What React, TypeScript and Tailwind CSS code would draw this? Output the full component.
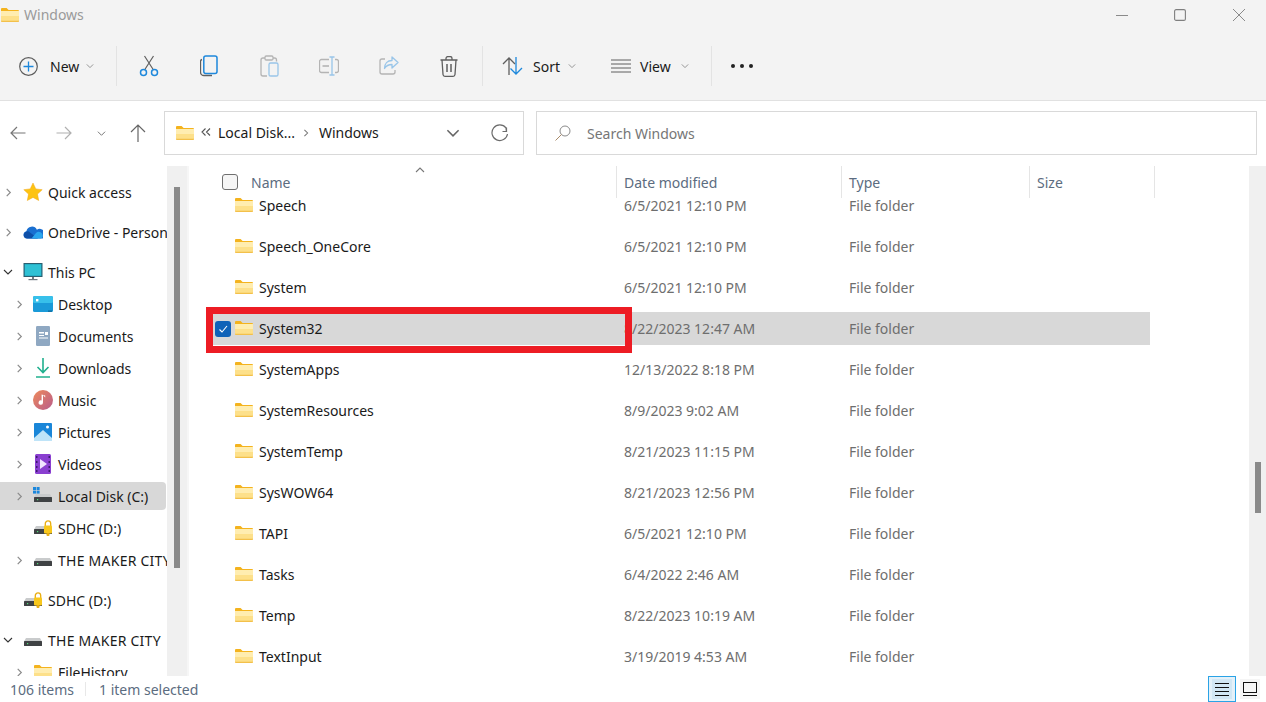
import React from "react";

const Chevron = ({ dir = "right", size = 10, color = "#7f7f7f" }: { dir?: "right" | "down" | "up"; size?: number; color?: string }) => (
  <svg width={size} height={size} viewBox="0 0 10 10" fill="none" stroke={color} strokeWidth={dir === "right" ? 1.3 : 1.1} className="shrink-0">
    {dir === "right" && <path d="M3 1l4 4-4 4" />}
    {dir === "down" && <path d="M1 3l4 4 4-4" />}
    {dir === "up" && <path d="M1 7l4-4 4 4" />}
  </svg>
);

const Folder = ({ w = 18, h = 14 }: { w?: number; h?: number }) => (
  <svg width={w} height={h} viewBox="0 0 18 14" className="shrink-0">
    <path d="M0 1a1 1 0 0 1 1-1h4.6l2 2H17a1 1 0 0 1 1 1v2H0z" fill="#f4b31e" />
    <rect x="0" y="3" width="18" height="11" rx="0.8" fill="#f3c04a" />
    <rect x="0" y="3" width="18" height="9.8" rx="0.5" fill="#fde08a" />
    <rect x="0" y="3" width="18" height="5" fill="#ffedb0" />
  </svg>
);

const Drive = ({ lock, win }: { lock?: boolean; win?: boolean }) => (
  <svg width="20" height="20" viewBox="0 0 20 20" className="shrink-0">
    <path d="M3 8h14l2 3.5H1z" fill="#c9cbcc" />
    <rect x="1" y="11" width="18" height="5" rx="0.5" fill="#3f4244" />
    <rect x="4" y="13" width="1.2" height="1.2" fill="#53e07c" />
    {win && (
      <g fill="#1b87dc">
        <rect x="0" y="1" width="3" height="3" />
        <rect x="3.6" y="1" width="3" height="3" />
        <rect x="0" y="4.6" width="3" height="3" />
        <rect x="3.6" y="4.6" width="3" height="3" />
      </g>
    )}
    {lock && (
      <g>
        <path d="M12.3 8V5.6a2.7 2.7 0 0 1 5.4 0V8" fill="none" stroke="#e8ac10" strokeWidth="1.3" />
        <rect x="11" y="7.5" width="8" height="8" rx="1" fill="#f8c71c" />
        <rect x="13.5" y="15" width="3" height="3" rx="1" fill="#e8ac10" />
      </g>
    )}
  </svg>
);

const icons: Record<string, React.ReactNode> = {
  star: (
    <svg width="20" height="20" viewBox="0 0 20 20" className="shrink-0">
      <path d="M10 1l2.8 5.9 6.4.8-4.7 4.4 1.2 6.4L10 15.4l-5.7 3.1 1.2-6.4L.8 7.7l6.4-.8z" fill="#fdc312" stroke="#f3a712" strokeWidth="0.5" />
    </svg>
  ),
  cloud: (
    <svg width="20" height="14" viewBox="0 0 20 14" className="shrink-0">
      <path d="M4 13.500a3.700 3.700 0 0 1-.6-7.300 5.600 5.600 0 0 1 10.500-1.500 4.600 4.600 0 0 1 5.600 8.800z" fill="#1a6fd0" />
      <path d="M4 13.500a3.300 3.300 0 0 1-2.900-4.800A3.600 3.600 0 0 1 7 7.400l8 6.100z" fill="#0e4fa8" />
      <path d="M8.500 13.500l4.500-5.500a4 4 0 0 1 6.700 3.600 2.600 2.600 0 0 1-2 1.900z" fill="#2ba6ee" />
    </svg>
  ),
  pc: (
    <svg width="20" height="18" viewBox="0 0 20 18" className="shrink-0">
      <rect x="1" y="0.500" width="18" height="13" fill="#1f9fb8" stroke="#2b5f70" />
      <rect x="2" y="1.500" width="16" height="11" fill="#2fc1d4" />
      <rect x="9" y="14" width="2" height="2" fill="#6f7a80" />
      <rect x="5.500" y="16" width="9" height="1.200" fill="#6f7a80" />
    </svg>
  ),
  desktop: (
    <svg width="20" height="16" viewBox="0 0 20 16" className="shrink-0">
      <rect x="0" y="0" width="20" height="16" rx="1.500" fill="#1a9ad8" />
      <rect x="0" y="0" width="20" height="7" rx="1.500" fill="#37c0ea" />
      <rect x="3" y="3" width="2.400" height="2.400" fill="#fff" />
      <rect x="15" y="14.600" width="4" height="1" fill="#0d5a88" />
    </svg>
  ),
  docs: (
    <svg width="16" height="20" viewBox="0 0 16 20" className="shrink-0">
      <rect x="1" y="0" width="14" height="20" rx="1.200" fill="#8fa8c2" />
      <rect x="4" y="6" width="5" height="1.500" fill="#fff" />
      <rect x="10" y="6" width="3" height="3" fill="#fff" />
      <rect x="4" y="9" width="5" height="1" fill="#fff" />
      <rect x="4" y="11.500" width="9" height="1" fill="#fff" />
    </svg>
  ),
  down: (
    <svg width="16" height="20" viewBox="0 0 16 20" className="shrink-0" fill="none" stroke="#20b08e" strokeWidth="1.600">
      <path d="M8 0v14M2.500 9L8 14.500 13.500 9" />
      <path d="M1 19h14" strokeWidth="1.500" />
    </svg>
  ),
  music: (
    <svg width="20" height="20" viewBox="0 0 20 20" className="shrink-0">
      <defs>
        <linearGradient id="mg" x1="0" y1="0" x2="1" y2="1">
          <stop offset="0" stopColor="#ee8a5a" />
          <stop offset="1" stopColor="#b85c8c" />
        </linearGradient>
      </defs>
      <circle cx="10" cy="10" r="10" fill="url(#mg)" />
      <path d="M10 5v7.500a2.200 2.200 0 1 1-1.400-2V4.500l3.600 1v2z" fill="#fff" />
    </svg>
  ),
  pics: (
    <svg width="18" height="18" viewBox="0 0 18 18" className="shrink-0">
      <rect width="18" height="18" rx="1" fill="#1a86d8" />
      <path d="M0 18V15l9-8 9 8v3z" fill="#bfe4f8" />
      <circle cx="13.500" cy="4" r="1.500" fill="#fff" />
    </svg>
  ),
  videos: (
    <svg width="16" height="20" viewBox="0 0 16 20" className="shrink-0">
      <rect width="16" height="20" rx="1.500" fill="#8a3fd0" />
      <path d="M5 5l7 5-7 5z" fill="#f0e4ff" />
      <g fill="#3d1a70">
        <rect x="1" y="2" width="1.500" height="2" />
        <rect x="1" y="7" width="1.500" height="2" />
        <rect x="1" y="12" width="1.500" height="2" />
        <rect x="1" y="16" width="1.500" height="2" />
        <rect x="13.500" y="2" width="1.500" height="2" />
        <rect x="13.500" y="7" width="1.500" height="2" />
        <rect x="13.500" y="12" width="1.500" height="2" />
        <rect x="13.500" y="16" width="1.500" height="2" />
      </g>
    </svg>
  ),
  disk: <Drive />,
  cdisk: <Drive win />,
  lockdisk: <Drive lock />,
  folder: <Folder />,
};

type Nav = { label: string; icon: string; level: 0 | 1; chev?: "right" | "down"; mt?: boolean; sel?: boolean; wide?: boolean };
const nav: Nav[] = [
  { label: "Quick access", icon: "star", level: 0, chev: "right" },
  { label: "OneDrive - Personal", icon: "cloud", level: 0, chev: "right", mt: true },
  { label: "This PC", icon: "pc", level: 0, chev: "down", mt: true },
  { label: "Desktop", icon: "desktop", level: 1, chev: "right" },
  { label: "Documents", icon: "docs", level: 1, chev: "right" },
  { label: "Downloads", icon: "down", level: 1, chev: "right" },
  { label: "Music", icon: "music", level: 1, chev: "right" },
  { label: "Pictures", icon: "pics", level: 1, chev: "right" },
  { label: "Videos", icon: "videos", level: 1, chev: "right" },
  { label: "Local Disk (C:)", icon: "cdisk", level: 1, chev: "right", sel: true },
  { label: "SDHC (D:)", icon: "lockdisk", level: 1 },
  { label: "THE MAKER CITY", icon: "disk", level: 1, chev: "right", wide: true },
  { label: "SDHC (D:)", icon: "lockdisk", level: 0, mt: true },
  { label: "THE MAKER CITY", icon: "disk", level: 0, chev: "down", mt: true, wide: true },
  { label: "FileHistory", icon: "folder", level: 1, chev: "right" },
];

const files = [
  ["Speech", "6/5/2021 12:10 PM"],
  ["Speech_OneCore", "6/5/2021 12:10 PM"],
  ["System", "6/5/2021 12:10 PM"],
  ["System32", "8/22/2023 12:47 AM"],
  ["SystemApps", "12/13/2022 8:18 PM"],
  ["SystemResources", "8/9/2023 9:02 AM"],
  ["SystemTemp", "8/21/2023 11:15 PM"],
  ["SysWOW64", "8/21/2023 12:56 PM"],
  ["TAPI", "6/5/2021 12:10 PM"],
  ["Tasks", "6/4/2022 2:46 AM"],
  ["Temp", "8/22/2023 10:19 AM"],
  ["TextInput", "3/19/2019 4:53 AM"],
];

const S = "#5f5f5f";
const B = "#1e88dc";

const tools: React.ReactNode[] = [
  <svg key="cut" width="20" height="22" viewBox="0 0 20 22" fill="none" strokeWidth="1.200">
    <path d="M5.500 15L14.500 1M14.500 15L5.500 1" stroke={S} />
    <circle cx="4.500" cy="17.500" r="3" stroke={B} strokeWidth="1.500" />
    <circle cx="15.500" cy="17.500" r="3" stroke={B} strokeWidth="1.500" />
  </svg>,
  <svg key="copy" width="18" height="22" viewBox="0 0 18 22" fill="none">
    <path d="M2 4.500a2 2 0 0 0-1.500 2V17a3.500 3.500 0 0 0 3.500 3.500h8" stroke={S} strokeWidth="1.300" />
    <rect x="3.800" y="1" width="13.200" height="17.500" rx="2" stroke={B} strokeWidth="1.500" />
  </svg>,
  <svg key="paste" width="19" height="22" viewBox="0 0 19 22" fill="none" opacity="0.42">
    <path d="M5 3H3a2 2 0 0 0-2 2v14a2 2 0 0 0 2 2h4" stroke={S} strokeWidth="1.300" />
    <path d="M13 3h1.500a2 2 0 0 1 2 2v1.500" stroke={S} strokeWidth="1.300" />
    <rect x="5" y="1" width="8" height="4" rx="1.200" stroke={S} strokeWidth="1.300" />
    <rect x="9" y="8" width="9" height="13" rx="1.600" stroke={B} strokeWidth="1.300" />
  </svg>,
  <svg key="rename" width="20" height="20" viewBox="0 0 20 20" fill="none" opacity="0.42">
    <path d="M10 3.500H2.500a2 2 0 0 0-2 2v9a2 2 0 0 0 2 2H10" stroke={S} strokeWidth="1.300" />
    <path d="M16 3.500h1.500a2 2 0 0 1 2 2v9a2 2 0 0 1-2 2H16" stroke={S} strokeWidth="1.300" />
    <path d="M3.500 10H10" stroke={S} strokeWidth="1.600" />
    <path d="M13 1v18M10.500 1h5M10.500 19h5" stroke={B} strokeWidth="1.300" />
  </svg>,
  <svg key="share" width="20" height="20" viewBox="0 0 20 20" fill="none" opacity="0.42">
    <path d="M6 3H3a2 2 0 0 0-2 2v11a2 2 0 0 0 2 2h11a2 2 0 0 0 2-2v-2" stroke={S} strokeWidth="1.300" />
    <path d="M13 1l6 5.500-6 5.500V8.500c-4 0-6 1.500-7.500 4 0-5 3-8 7.500-8z" stroke={B} strokeWidth="1.300" strokeLinejoin="round" />
  </svg>,
  <svg key="del" width="18" height="21" viewBox="0 0 18 21" fill="none" stroke={S} strokeWidth="1.300">
    <path d="M.5 4h17M6 4V2.500a2 2 0 0 1 2-2h2a2 2 0 0 1 2 2V4" />
    <path d="M2 4l1 14.500a2 2 0 0 0 2 1.800h8a2 2 0 0 0 2-1.800L16 4" />
    <path d="M7 8v8M11 8v8" strokeWidth="1.500" />
  </svg>,
];

const Divider = () => <div className="h-10 w-px bg-[#e3e3e3] shrink-0" />;

export default function App() {
  return (
    <div className="relative flex flex-col h-[702px] w-[1266px] overflow-hidden bg-white font-['Noto_Sans',sans-serif] text-[14px] text-[#1a1a1a]">
      {/* Title bar */}
      <div className="flex h-[30px] items-center bg-[#f3f3f3] shrink-0 pb-[1px]">
        <div className="ml-[1px]"><Folder /></div>
        <span className="ml-[5px] text-[#9a9a9a]">Windows</span>
        <div className="ml-auto flex items-center pr-[21px]">
          <svg width="12" height="12" viewBox="0 0 12 12" className="mr-[46px]" stroke="#8a8a8a"><path d="M0 6.500h12" /></svg>
          <svg width="12" height="12" viewBox="0 0 12 12" className="mr-[47px]" fill="none" stroke="#7f7f7f" strokeWidth="1.100"><rect x=".6" y=".6" width="10.800" height="10.800" rx="1.500" /></svg>
          <svg width="12" height="12" viewBox="0 0 12 12" stroke="#8a8a8a" strokeWidth="1"><path d="M0 0l12 12M12 0L0 12" /></svg>
        </div>
      </div>

      {/* Toolbar */}
      <div className="flex h-[71px] items-center bg-[#f3f3f3] border-b border-[#e1e1e1] pt-[2px] shrink-0">
        <div className="flex items-center w-[116px] pl-[19px]">
          <svg width="19" height="19" viewBox="0 0 19 19" fill="none" className="shrink-0">
            <circle cx="9.500" cy="9.500" r="8.800" stroke="#5c5c5c" strokeWidth="1.200" />
            <path d="M9.500 4.500v10M4.500 9.500h10" stroke={B} strokeWidth="1.300" />
          </svg>
          <span className="ml-[12px]">New</span>
          <span className="ml-[7px]"><Chevron dir="down" size={8} color="#8a8a8a" /></span>
        </div>
        <Divider />
        <div className="flex items-center ml-[2px]">
          {tools.map((t, i) => (
            <div key={i} className="flex w-[60px] items-center justify-center">{t}</div>
          ))}
        </div>
        <div className="ml-[3px]"><Divider /></div>
        <div className="flex items-center ml-[19px]">
          <svg width="22" height="20" viewBox="0 0 22 20" fill="none" strokeWidth="1.300" className="shrink-0">
            <path d="M7 19V2M1 8l6-6 6 6" stroke={S} />
            <path d="M14 1v17M8.500 12.500l5.500 5.500 6-6" stroke={B} />
          </svg>
          <span className="ml-[9px]">Sort</span>
          <span className="ml-[8px]"><Chevron dir="down" size={8} color="#8a8a8a" /></span>
        </div>
        <div className="flex items-center ml-[35px]">
          <svg width="20" height="14" viewBox="0 0 20 14" stroke="#5f5f5f" strokeWidth="1" className="shrink-0">
            <path d="M0 1h20M0 5h20M0 9h20M0 13h20" />
          </svg>
          <span className="ml-[9px]">View</span>
          <span className="ml-[10px]"><Chevron dir="down" size={8} color="#8a8a8a" /></span>
        </div>
        <div className="ml-[22px]"><Divider /></div>
        <div className="flex items-center gap-[5px] ml-[19px]">
          <span className="h-[4px] w-[4px] rounded-full bg-[#222]" />
          <span className="h-[4px] w-[4px] rounded-full bg-[#222]" />
          <span className="h-[4px] w-[4px] rounded-full bg-[#222]" />
        </div>
      </div>

      {/* Address row */}
      <div className="flex h-[65px] items-start pt-[10px] shrink-0">
        <div className="flex h-[44px] items-center w-[164px] shrink-0">
          <svg width="16" height="14" viewBox="0 0 16 14" fill="none" stroke="#777" strokeWidth="1.200" className="ml-[10px]"><path d="M15.500 7H1M7 1L1 7l6 6" /></svg>
          <svg width="16" height="14" viewBox="0 0 16 14" fill="none" stroke="#b0b0b0" strokeWidth="1.200" className="ml-[30px]"><path d="M.5 7H15M9 1l6 6-6 6" /></svg>
          <span className="ml-[25px]"><Chevron dir="down" size={9} color="#777" /></span>
          <svg width="16" height="18" viewBox="0 0 16 18" fill="none" stroke="#666" strokeWidth="1.200" className="ml-[24px]"><path d="M8 18V1M1 8l7-7 7 7" /></svg>
        </div>
        <div className="flex h-[44px] w-[360px] items-center border border-[#d9d9d9] shrink-0 pl-[11px]">
          <Folder />
          <svg width="10" height="8" viewBox="0 0 10 8" fill="none" stroke="#555" strokeWidth="1.100" className="ml-[7px] -mt-[2px]"><path d="M4.500.5L1 4l3.500 3.500M9 .5L5.500 4 9 7.500" /></svg>
          <span className="ml-[7px] -mt-[2px]">Local Disk...</span>
          <span className="ml-[7px]"><Chevron size={8} color="#777" /></span>
          <span className="ml-[9px] -mt-[2px]">Windows</span>
          <span className="ml-auto"><Chevron dir="down" size={14} color="#666" /></span>
          <svg width="18" height="18" viewBox="0 0 18 18" fill="none" stroke="#6c6c6c" strokeWidth="1.200" className="ml-[31px] mr-[14px]">
            <path d="M15.500 3.500v4h-4" />
            <path d="M16.500 10a7.800 7.800 0 1 1-1.500-6l.5 3.500" />
          </svg>
        </div>
        <div className="ml-[12px] flex h-[44px] w-[721px] items-center border border-[#d9d9d9] shrink-0 pl-[18px]">
          <svg width="16" height="16" viewBox="0 0 16 16" fill="none" className="shrink-0">
            <circle cx="10" cy="6" r="5" stroke="#8a8a8a" strokeWidth="1" />
            <path d="M6.500 9.500L.5 15.500" stroke="#a88a6a" strokeWidth="1" />
          </svg>
          <span className="ml-[16px] text-[#767676]">Search Windows</span>
        </div>
      </div>

      {/* Body */}
      <div className="flex flex-1 min-h-0">
        {/* Sidebar */}
        <div className="w-[167px] shrink-0 overflow-hidden pt-[10px]">
          {nav.map((n, i) => (
            <div
              key={i}
              className={`flex h-[32px] items-center whitespace-nowrap ${n.mt ? "mt-[8px]" : ""} relative`}
            >
              {n.sel && <div className="absolute inset-x-0 top-[2px] bottom-[2px] w-[166px] rounded-r-[4px] bg-[#d8d8d8]" />}
              <div className={`relative flex items-center ${n.level === 1 ? "pl-[14px]" : "pl-[3px]"}`}>
                <div className="flex w-[10px] justify-center shrink-0">
                  {n.chev && <Chevron dir={n.chev} size={n.chev === "down" ? 10 : 9} color={n.chev === "down" ? "#333" : "#8a8a8a"} />}
                </div>
                <div className={`flex w-[20px] justify-center shrink-0 ${n.level === 1 ? "ml-[9px]" : "ml-[10px]"}`}>
                  {icons[n.icon]}
                </div>
                <span className={`ml-[5px] ${n.wide ? "tracking-[0.25px]" : ""}`}>{n.label}</span>
              </div>
            </div>
          ))}
        </div>
        <div className="flex w-[20px] shrink-0 justify-center bg-[#f0f0f0] pt-[21px]">
          <div className="h-[381px] w-[6px] bg-[#8a8a8a]" />
        </div>

        {/* Main list */}
        <div className="flex flex-1 min-w-0 flex-col border-l-2 border-[#f6f6f6]">
          <div className="relative flex h-[32px] items-center text-[#5c6c80] shrink-0">
            <div className="absolute left-[226px] top-[-1px]"><Chevron dir="up" size={10} color="#777" /></div>
            <div className="flex w-[428px] items-center border-r border-[#e5e5e5] h-full shrink-0 pl-[33px]">
              <span className="h-[16px] w-[16px] rounded-[3px] border border-[#6f6f6f] bg-[#f5f5f5] shrink-0" />
              <span className="ml-[13px]">Name</span>
            </div>
            <div className="flex w-[225px] items-center border-r border-[#e5e5e5] h-full shrink-0 pl-[7px]">Date modified</div>
            <div className="flex w-[188px] items-center border-r border-[#e5e5e5] h-full shrink-0 pl-[7px]">Type</div>
            <div className="flex w-[125px] items-center border-r border-[#e5e5e5] h-full shrink-0 pl-[7px]">Size</div>
          </div>
          <div className="flex-1 min-h-0 overflow-hidden">
            <div className="-mt-[13px]">
              {files.map(([name, date]) => {
                const sel = name === "System32";
                return (
                  <div key={name} className="flex h-[41px] items-center">
                    <div className={`flex h-[33px] w-[937px] items-center ml-[24px] ${sel ? "bg-[#d8d8d8]" : ""}`}>
                      <div className="flex w-[20px] shrink-0 pl-[2px]">
                        {sel && (
                          <span className="flex h-[16px] w-[16px] items-center justify-center rounded-[3px] bg-[#0f62b8]">
                            <svg width="10" height="10" viewBox="0 0 10 10" fill="none" stroke="#fff" strokeWidth="1.100"><path d="M1.500 5.500l2.500 2.500 5-6" /></svg>
                          </span>
                        )}
                      </div>
                      <div className="ml-[2px] -mt-[2px]"><Folder /></div>
                      <span className="ml-[6px] w-[365px] shrink-0">{name}</span>
                      <span className="w-[225px] shrink-0 text-[#6e6e6e]">{date}</span>
                      <span className="text-[#6e6e6e]">File folder</span>
                    </div>
                  </div>
                );
              })}
            </div>
          </div>
        </div>

        {/* Right scrollbar */}
        <div className="w-[17px] shrink-0 bg-[#f0f0f0] flex justify-center pt-[296px] pl-[1px]">
          <div className="h-[51px] w-[6px] bg-[#8a8a8a]" />
        </div>
      </div>

      {/* Status bar */}
      <div className="flex h-[26px] items-center text-[#5c6c80] shrink-0 pl-[10px]">
        <span className="w-[75px] shrink-0">106 items</span>
        <span className="h-[14px] w-px bg-[#e8e8e8] shrink-0" />
        <span className="ml-[13px]">1 item selected</span>
        <div className="ml-auto flex items-center h-full pr-[6px]">
          <div className="flex h-full w-[28px] items-center justify-center border border-[#2aa3e6] bg-[#e4f1f9]">
            <div className="flex h-[20px] w-[20px] items-center justify-center bg-[#d2e7f4]">
              <svg width="14" height="14" viewBox="0 0 14 14" stroke="#111" strokeWidth="1"><path d="M0 1.500h14M0 5.500h14M0 9.500h14M0 13.500h14" /></svg>
            </div>
          </div>
          <div className="ml-[4px] flex h-[20px] w-[20px] items-center justify-center bg-[#f5f5f5]">
            <svg width="14" height="14" viewBox="0 0 14 14" fill="none" stroke="#111" strokeWidth="1"><rect x=".5" y=".5" width="13" height="10" /><path d="M0 13.500h14" /></svg>
          </div>
        </div>
      </div>

      {/* Red annotation box */}
      <div className="absolute left-[206px] top-[307px] h-[46px] w-[426px] border-[7px] border-[#ed1c24]" />
    </div>
  );
}
